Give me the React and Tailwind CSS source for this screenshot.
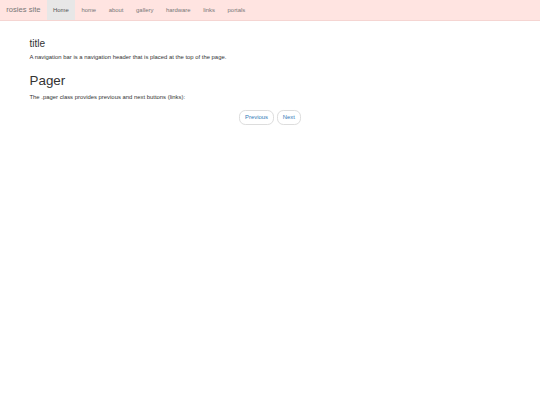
import React from 'react';

const links = ['home', 'about', 'gallery', 'hardware', 'links', 'portals'];

function Navbar() {
    return (
        <nav className="h-[21.1px] bg-[#ffe4e1] border-b-[0.42px] border-[#f5d5d2] flex items-stretch">
            <a className="px-[6.3px] flex items-center text-[7.6px] text-[#777]">rosies site</a>
            <ul className="flex items-stretch">
                <li className="flex">
                    <a className="px-[6.3px] flex items-center text-[5.9px] text-[#555] bg-[#e7e7e7]">Home</a>
                </li>
                {links.map(link => (
                    <li key={link} className="flex">
                        <a className="px-[6.3px] flex items-center text-[5.9px] text-[#777]">{link}</a>
                    </li>
                ))}
            </ul>
        </nav>
    );
}

function Pager() {
    return (
        <ul className="mt-[8.4px] flex justify-center gap-[2.5px] text-[5.9px] leading-[8.4px]">
            <li>
                <a className="block px-[5.2px] py-[2.1px] bg-white border-[0.42px] border-[#ddd] rounded-[6.3px] text-[#337ab7]">Previous</a>
            </li>
            <li>
                <a className="block px-[5.2px] py-[2.1px] bg-white border-[0.42px] border-[#ddd] rounded-[6.3px] text-[#337ab7]">Next</a>
            </li>
        </ul>
    );
}

export default function App() {
    return (
        <div className="min-h-[405px] bg-white text-[#333]" style={{ fontFamily: '"Liberation Sans", Arial, sans-serif' }}>
            <Navbar />
            <div className="w-[493.6px] mx-auto px-[6.3px] pt-[16.8px]">
                <h3 className="mb-[4.2px] text-[10.1px] leading-[11.1px]">title</h3>
                <p className="mb-[12.8px] text-[5.9px] leading-[8.4px]">A navigation bar is a navigation header that is placed at the top of the page.</p>
                <h2 className="mb-[4.2px] text-[13.4px] leading-[14.7px]">Pager</h2>
                <p className="text-[5.9px] leading-[8.4px]">The .pager class provides previous and next buttons (links):</p>
                <Pager />
            </div>
        </div>
    );
}
